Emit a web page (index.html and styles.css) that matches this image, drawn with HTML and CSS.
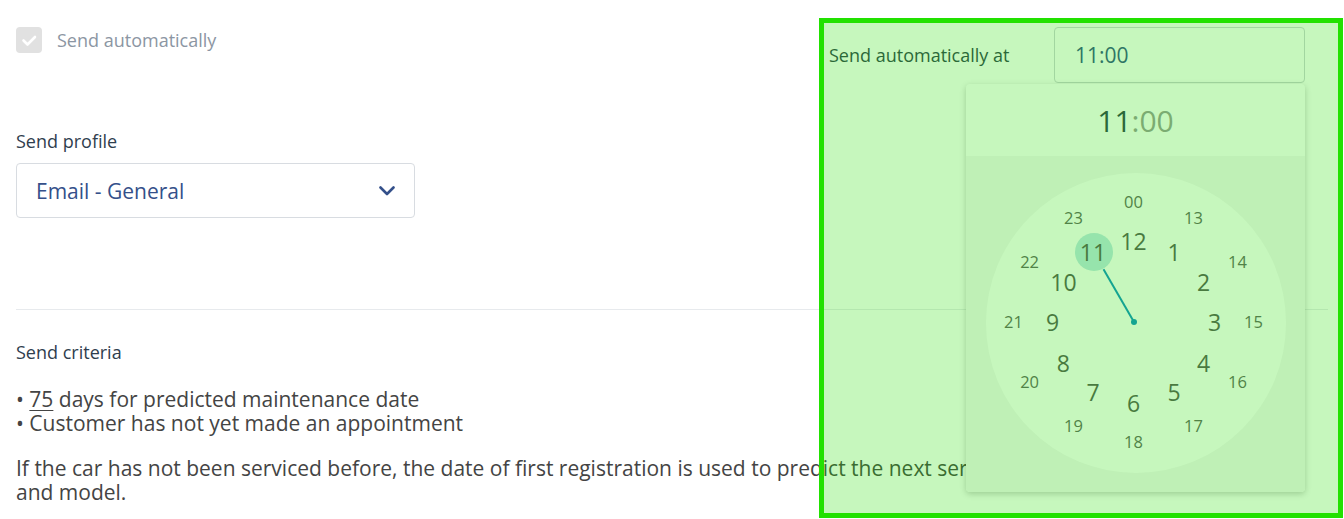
FILE: index.html
```html
<!DOCTYPE html>
<html>
	<head>
		<meta charset="utf-8">
		<title>Reminder settings</title>
		<link rel="stylesheet" href="styles.css">
	</head>
	<body>
		<div class="page">
			<div class="top-row">
				<label class="check-field">
					<span class="checkbox">
						<svg width="26" height="26" viewBox="0 0 26 26"><path d="M7.5 13.5 L11.5 17.5 L19 10" fill="none" stroke="#fff" stroke-width="2.6" stroke-linecap="round" stroke-linejoin="round"/></svg>
					</span>
					<span class="check-label">Send automatically</span>
				</label>
				<div class="time-field">
					<span class="time-label">Send automatically at</span>
					<div class="time-picker">
						<div class="time-input">11:00</div>
						<div class="clock-popup">
							<div class="clock-head"><span class="head-hours">11</span><span class="head-mins">:00</span></div>
							<div class="clock-body">
								<div class="clock-face" id="clockFace">
									<span class="clock-selected"></span>
									<svg class="clock-hand" width="300" height="300" viewBox="0 0 300 300">
										<line x1="150" y1="150" x2="119.5" y2="97.2" stroke="#0f8fc4" stroke-width="2"/>
										<circle cx="150" cy="150" r="3" fill="#0f8fc4"/>
									</svg>
								</div>
							</div>
						</div>
					</div>
				</div>
			</div>

			<div class="field-label">Send profile</div>
			<div class="select">
				<span>Email - General</span>
				<svg width="16" height="10" viewBox="0 0 16 10"><path d="M1.5 1.5 L8 8 L14.5 1.5" fill="none" stroke="#34508a" stroke-width="2.6" stroke-linecap="round" stroke-linejoin="round"/></svg>
			</div>

			<div class="divider"></div>

			<div class="field-label section-title">Send criteria</div>
			<div class="criteria">
				<div>• <u>75</u> days for predicted maintenance date</div>
				<div>• Customer has not yet made an appointment</div>
			</div>
			<p class="note">If the car has not been serviced before, the date of first registration is used to predict the next service date based on the make<br>and model.</p>
		</div>

		<div class="highlight"></div>

		<script type="text/javascript">
			var face = document.getElementById("clockFace");
			var inner = ["12", "1", "2", "3", "4", "5", "6", "7", "8", "9", "10", "11"];
			var outer = ["00", "13", "14", "15", "16", "17", "18", "19", "20", "21", "22", "23"];

			function addNumber(text, radius, cls, i) {
				var a = i * Math.PI / 6;
				var el = document.createElement("span");
				el.className = "clock-num " + cls;
				el.innerText = text;
				el.style.left = (148 + radius * Math.sin(a)).toFixed(1) + "px";
				el.style.top = (149 - radius * Math.cos(a)).toFixed(1) + "px";
				face.appendChild(el);
			}

			for (var i = 0; i < 12; i++) {
				addNumber(inner[i], 81, "inner", i);
				addNumber(outer[i], 120, "outer", i);
			}
		</script>
	</body>
</html>
```

FILE: styles.css
```css
html, body {
	margin: 0;
	height: 100%;
}
body {
	font-family: "Open Sans", "Liberation Sans", sans-serif;
	background-color: #fff;
	color: #444;
	overflow: hidden;
}
.page {
	padding: 27px 16px 0;
}
.top-row {
	display: flex;
	justify-content: space-between;
	align-items: flex-start;
}
.check-field {
	display: flex;
	align-items: center;
}
.checkbox {
	display: block;
	width: 26px;
	height: 26px;
	border-radius: 4px;
	background-color: #e1e1e1;
}
.checkbox svg {
	display: block;
}
.check-label {
	margin-left: 15px;
	font-size: 18px;
	line-height: 26px;
	color: #8c96a3;
}
.time-field {
	display: flex;
	align-items: center;
	margin-right: 23px;
}
.time-label {
	width: 225px;
	font-size: 18px;
	color: #2f3e4e;
}
.time-picker {
	position: relative;
}
.time-input {
	box-sizing: border-box;
	width: 251px;
	height: 56px;
	padding-left: 20px;
	border: 1px solid #cfd3d8;
	border-radius: 4px;
	font-size: 21px;
	line-height: 54px;
	color: #34508a;
}
.clock-popup {
	position: absolute;
	top: 57px;
	right: 0;
	z-index: 5;
	width: 339px;
	border-radius: 4px;
	background-color: #fff;
	box-shadow: 0 2px 6px rgba(0, 0, 0, 0.22);
	overflow: hidden;
}
.clock-head {
	height: 72px;
	line-height: 74px;
	text-align: center;
	font-size: 30px;
}
.head-hours {
	color: #2f3e4e;
}
.head-mins {
	color: #9a9a9a;
}
.clock-body {
	background-color: #f6f6f6;
	padding: 17px 0 19px;
}
.clock-face {
	position: relative;
	width: 300px;
	height: 300px;
	margin: 0 auto;
	border-radius: 50%;
	background-color: #fff;
}
.clock-selected {
	position: absolute;
	left: 108px;
	top: 79px;
	width: 38px;
	height: 38px;
	margin: -19px 0 0 -19px;
	border-radius: 50%;
	background-color: #bfe6e8;
}
.clock-hand {
	position: absolute;
	left: -2px;
	top: -1px;
}
.clock-num {
	position: absolute;
	transform: translate(-50%, -50%);
	line-height: 1;
	white-space: nowrap;
}
.clock-num.inner {
	font-size: 23px;
	color: #575757;
}
.clock-num.outer {
	font-size: 16.5px;
	color: #626262;
}
.field-label {
	margin-top: 47px;
	font-size: 18px;
	line-height: 22px;
	color: #2f3e4e;
}
.select {
	box-sizing: border-box;
	display: flex;
	align-items: center;
	justify-content: space-between;
	width: 399px;
	height: 55px;
	margin-top: 11px;
	padding: 0 19px 0 19px;
	border: 1px solid #d8dce1;
	border-radius: 4px;
	font-size: 21px;
	color: #34508a;
}
.select svg {
	display: block;
}
.divider {
	margin-top: 91px;
	border-top: 1px solid #e7eaed;
}
.section-title {
	margin-top: 31px;
}
.criteria {
	margin-top: 24px;
	font-size: 21px;
	line-height: 24px;
	color: #444;
}
.criteria u {
	text-decoration-thickness: 1px;
	text-underline-offset: 3px;
}
.note {
	margin: 21px 0 0;
	font-size: 21px;
	line-height: 24px;
	color: #444;
}
.highlight {
	position: absolute;
	left: 819px;
	top: 18px;
	box-sizing: border-box;
	width: 524px;
	height: 500px;
	z-index: 10;
	border: 5px solid #22e100;
	background-color: rgba(34, 225, 0, 0.26);
	pointer-events: none;
}
```
